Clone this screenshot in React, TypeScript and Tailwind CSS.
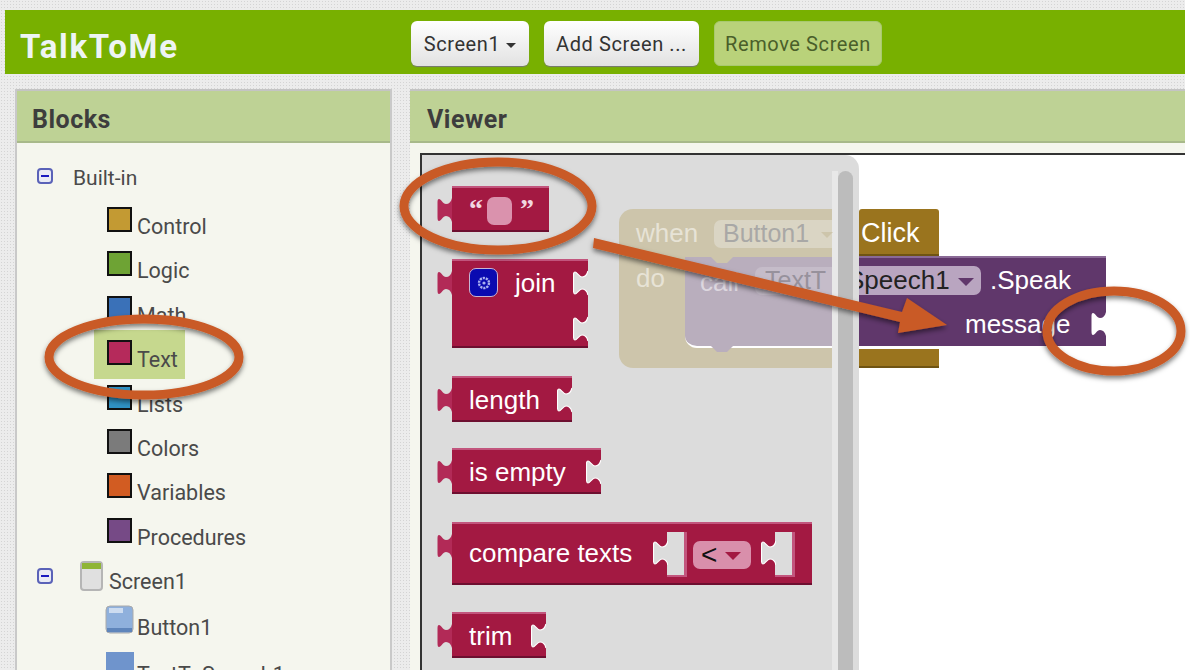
import type { ReactNode } from 'react';

const SANS = 'font-["Liberation_Sans",Arial,sans-serif]';
const UI = 'font-["Roboto","Noto_Sans",sans-serif]';

const TREE = [
  { label: 'Control', color: 'bg-[#c39a33]' },
  { label: 'Logic', color: 'bg-[#6ea334]' },
  { label: 'Math', color: 'bg-[#3a71b8]' },
  { label: 'Text', color: 'bg-[#b52a5b]', selected: true },
  { label: 'Lists', color: 'bg-[#2f92c4]' },
  { label: 'Colors', color: 'bg-[#7b7b7b]' },
  { label: 'Variables', color: 'bg-[#d25c22]' },
  { label: 'Procedures', color: 'bg-[#764a86]' },
];

const NOTCH = 'M15 1C14 5 12 7 9 7C6 7 4 2 2 2C1 2 .5 3 .5 5V20C.5 23 1 24 2 24C4 24 6 19 9 19C12 19 14 21 15 25';

function Collapse() {
  return (
    <span className="flex h-[16px] w-[16px] shrink-0 items-center justify-center rounded-[4px] border-2 border-[#5a62b8] bg-[#e9ebf5]">
      <span className="h-[2px] w-[8px] bg-[#1a1ac0]" />
    </span>
  );
}

function TreeRow({ label, color, selected }: { label: string; color: string; selected?: boolean }) {
  return (
    <div className="h-[44.4px] pl-[77px]">
      <div className={`flex h-[49px] w-[91px] items-start gap-[5px] pl-[13px] ${selected ? 'bg-[#c6d88e]' : ''}`}>
        <span className={`mt-[10px] h-[25px] w-[25px] shrink-0 border-2 border-[#111] ${color}`} />
        <span className="mt-[18px] text-[21.5px] leading-[24px] text-[#4a4a4a]">{label}</span>
      </div>
    </div>
  );
}

function Tab() {
  return (
    <svg width="15" height="26" viewBox="0 0 15 26" className="absolute left-[-15px] top-[9px]">
      <path d={NOTCH} fill="#b22a57" />
    </svg>
  );
}

// cut-out on a block's edge, the mirror of the tab
function Notch({ className }: { className: string }) {
  return (
    <svg width="15" height="26" viewBox="0 0 15 26" className={className}>
      <path d={NOTCH} fill="#dcdcdc" stroke="#fff" strokeWidth="1.2" />
    </svg>
  );
}

function Block({ w, h, socket, extraSocket, children }: { w: number; h: number; socket?: boolean; extraSocket?: boolean; children: ReactNode }) {
  return (
    <div
      className="relative flex items-start border-t-2 border-b-2 border-t-[#c2557d] border-b-[#6d0f30] bg-[#a31942] pl-[17px] text-[26px] text-white"
      style={{ width: w, height: h }}
    >
      <Tab />
      {children}
      {socket && <Notch className="absolute right-0 top-[9px]" />}
      {extraSocket && <Notch className="absolute right-0 top-[55px]" />}
    </div>
  );
}

function Socket() {
  return (
    <div className="relative mt-[8px] h-[45px] w-[20px] shrink-0 border-r-[3px] border-b-2 border-[#c2557d] bg-[#dcdcdc]">
      <Notch className="absolute left-[-14px] top-[8px]" />
    </div>
  );
}

export default function App() {
  return (
    <div className={`relative h-[670px] w-[1190px] overflow-hidden bg-white ${UI}`}>
      <div className="h-[670px] w-[1185px] bg-[#ececec] bg-[radial-gradient(#d4d4d4_1px,transparent_1px)] bg-[length:3px_3px] pt-[10px] pl-[5px]">
        <header className="flex h-[64px] w-[1180px] items-center bg-[#78b000]">
          <div className="w-[406px] pl-[15px] pt-[9px] text-[33px] font-bold tracking-[1.7px] text-[#eef4f4]">TalkToMe</div>
          <div className="flex items-center gap-[15px] pt-[2px] text-[20px] tracking-[0.6px] text-[#333]">
            <button className="flex h-[45px] w-[118px] items-center justify-center gap-[6px] rounded-[6px] bg-gradient-to-b from-white to-[#e2e2e2] pt-[2px] shadow-[0_1px_1px_#777]">
              Screen1
              <span className="mt-[2px] h-0 w-0 border-x-[5px] border-t-[5px] border-x-transparent border-t-[#333]" />
            </button>
            <button className="h-[45px] w-[155px] rounded-[6px] bg-gradient-to-b from-white to-[#e2e2e2] pt-[2px] shadow-[0_1px_1px_#777]">
              Add Screen ...
            </button>
            <button className="h-[45px] w-[168px] rounded-[6px] border border-[#a8c96f] bg-[#b9d27a] pt-[2px] text-[#4a5f2a]">
              Remove Screen
            </button>
          </div>
        </header>

        <div className="mt-[15px] flex gap-[18px] pl-[10px]">
          <section className="h-[600px] w-[377px] shrink-0 border-x-2 border-[#c9c9c9] bg-[#f5f6ee]">
            <h2 className="flex h-[54px] items-center border-t-2 border-b-2 border-t-[#c4c4c4] border-b-[#a8b98a] bg-[#bed295] pl-[15px] pt-[8px] text-[25px] font-bold tracking-[0.5px] text-[#3d3d3d]">
              Blocks
            </h2>
            <div className="pt-[18px]">
              <div className="flex h-[29px] items-center gap-[20px] pl-[20px] text-[21px] text-[#4a4a4a]">
                <Collapse />
                <span className="mt-[6px]">Built-in</span>
              </div>
              <div className="mt-[7px]">
                {TREE.map((row) => (
                  <TreeRow key={row.label} {...row} />
                ))}
              </div>
              <div className="mt-[2px] flex h-[44px] items-center pl-[20px] text-[21.5px] text-[#4a4a4a]">
                <Collapse />
                <svg width="23" height="30" viewBox="0 0 23 30" className="ml-[27px] shrink-0">
                  <rect x="1" y="1" width="21" height="28" rx="3" fill="#e0e0e0" stroke="#b5b5b5" strokeWidth="2" />
                  <rect x="2" y="2" width="19" height="6" fill="#8fb536" />
                </svg>
                <span className="ml-[6px] mt-[11px]">Screen1</span>
              </div>
              <div className="flex h-[44px] items-center gap-[2px] pl-[88px] text-[21.5px] text-[#4a4a4a]">
                <svg width="30" height="30" viewBox="0 0 30 30" className="shrink-0">
                  <rect x="1" y="1" width="27" height="27" rx="4" fill="#8fb0dc" stroke="#aaa" />
                  <rect x="4" y="3" width="14" height="5" fill="#cddcf0" />
                  <rect x="2" y="23" width="25" height="4" fill="#5f85bb" />
                </svg>
                <span className="mt-[15px]">Button1</span>
              </div>
              <div className="flex h-[44px] items-start gap-[2px] pl-[88px] pt-[9px] text-[21.5px] text-[#4a4a4a]">
                <svg width="30" height="30" viewBox="0 0 30 30" className="shrink-0">
                  <rect x="1" y="1" width="28" height="28" fill="#6f94cc" />
                </svg>
                <span className="mt-[8px]">TextToSpeech1</span>
              </div>
            </div>
          </section>

          <section className="h-[600px] w-[775px] shrink-0 bg-[#f5f6ee]">
            <h2 className="flex h-[54px] items-center border-t-2 border-b-2 border-t-[#c4c4c4] border-b-[#a8b98a] bg-[#bed295] pl-[17px] pt-[8px] text-[25px] font-bold tracking-[0.5px] text-[#3d3d3d]">
              Viewer
            </h2>
            <div className={`relative ml-[10px] mt-[10px] h-[540px] border-t-2 border-l-2 border-[#333] bg-white ${SANS}`}>
              {/* workspace blocks behind the flyout */}
              <div className="absolute left-[437px] top-[54px] h-[47px] w-[80px] rounded-t-[3px] border-b-2 border-[#6f5413] bg-[#9a741e] pl-[2px] pt-[8px] text-[27px] leading-[32px] text-white">
                Click
              </div>
              <div className="absolute left-[264px] top-[101px] h-[90px] w-[420px] border-t-2 border-[#8a6a96] bg-[#60376b] text-[26px] text-white">
                <span className="absolute left-[161px] top-[8px] flex h-[29px] items-center gap-[8px] rounded-r-[7px] bg-[#b9a5c0] pr-[7px] text-[#222]">
                  Speech1
                  <span className="mt-[3px] h-0 w-0 border-x-[8px] border-t-[8px] border-x-transparent border-t-[#60376b]" />
                </span>
                <span className="absolute left-[304px] top-[6px] leading-[32px]">.Speak</span>
                <span className="absolute left-[279px] top-[50px] leading-[32px]">message</span>
                <svg width="15" height="26" viewBox="0 0 15 26" className="absolute right-0 top-[53px]">
                  <path d={NOTCH} fill="#fff" />
                </svg>
              </div>
              <div className="absolute left-[437px] top-[194px] h-[19px] w-[80px] border-b-2 border-[#6f5413] bg-[#9a741e]" />

              {/* flyout */}
              <div className="absolute left-0 top-0 h-[540px] w-[437px] rounded-tr-[14px] bg-[#dcdcdc]">
                <div className="absolute left-[410px] top-[16px] h-[530px] w-[6px] bg-[#e8e8e8]" />
                <div className="absolute right-[6px] top-[16px] h-[530px] w-[15px] rounded-t-full bg-[#bcbcbc]" />

                <div className="absolute left-[197px] top-[54px] h-[159px] w-[213px] rounded-l-[14px] bg-[#cdc5ab] text-[26px] text-[#e7e3d6]">
                  <span className="absolute left-[17px] top-[5px]">when</span>
                  <span className="absolute left-[95px] top-[11px] flex h-[28px] w-[118px] items-center gap-[12px] rounded-l-[7px] bg-[#dad5c4] pl-[9px] text-[25px] text-[#a9a8a6]">
                    Button1
                    <span className="mt-[2px] h-0 w-0 border-x-[6px] border-t-[6px] border-x-transparent border-t-[#cdc5ab]" />
                  </span>
                  <span className="absolute left-[17px] top-[50px]">do</span>
                  <div className="absolute left-[66px] top-[48px] h-[91px] w-[147px] rounded-bl-[12px] border-b-2 border-white bg-[#b9aebd]">
                    <svg width="22" height="7" viewBox="0 0 22 7" className="absolute left-[26px] top-0">
                      <path d="M0 0H22L16 6H6Z" fill="#cdc5ab" />
                    </svg>
                    <span className="absolute left-[15px] top-[6px] text-[#ddd7df]">call</span>
                    <span className="absolute left-[70px] top-[10px] flex h-[28px] w-[77px] items-center rounded-l-[7px] bg-[#c5bcc9] pl-[10px] text-[25px] text-[#97919c]">TextT</span>
                    <svg width="22" height="8" viewBox="0 0 22 8" className="absolute left-[26px] top-[89px]">
                      <path d="M0 0H22L16 6H6Z" fill="#b9aebd" />
                    </svg>
                  </div>
                </div>

                <div className="absolute left-[30px] top-[31px] flex flex-col">
                  <div className="mb-[27px]">
                    <Block w={97} h={46}>
                      <span className="mt-[7px] font-['Liberation_Serif',serif] text-[28px] font-bold leading-[28px] text-[#f1d6e0]">“</span>
                      <span className="ml-[4px] mt-[9px] h-[28px] w-[25px] rounded-[7px] bg-[#da92ad]" />
                      <span className="ml-[8px] mt-[7px] font-['Liberation_Serif',serif] text-[28px] font-bold leading-[28px] text-[#f1d6e0]">”</span>
                    </Block>
                  </div>
                  <div className="mb-[28px]">
                    <Block w={136} h={89} socket extraSocket>
                      <span className="mt-[7px] flex h-[29px] w-[29px] items-center justify-center rounded-[7px] border border-[#c7b4d4] bg-[#0a0ab0]">
                        <svg width="16" height="16" viewBox="0 0 16 16">
                          <circle cx="8" cy="8" r="5" fill="none" stroke="#a9b0f0" strokeWidth="2.4" strokeDasharray="2.2 .9" />
                          <circle cx="8" cy="8" r="1.6" fill="#a9b0f0" />
                        </svg>
                      </span>
                      <span className="ml-[17px] mt-[6px] leading-[32px]">join</span>
                    </Block>
                  </div>
                  <div className="mb-[26px]">
                    <Block w={120} h={46} socket>
                      <span className="mt-[6px] leading-[32px]">length</span>
                    </Block>
                  </div>
                  <div className="mb-[28px]">
                    <Block w={149} h={46} socket>
                      <span className="mt-[6px] leading-[32px]">is empty</span>
                    </Block>
                  </div>
                  <div className="mb-[27px]">
                    <Block w={360} h={63}>
                      <span className="mt-[13px] w-[198px] shrink-0 leading-[32px]">compare texts</span>
                      <Socket />
                      <span className="ml-[6px] mt-[17px] flex h-[28px] w-[58px] shrink-0 items-center gap-[8px] rounded-[7px] bg-[#d98fab] pl-[8px] text-[28px] text-[#111]">
                        &lt;
                        <span className="mt-[2px] h-0 w-0 border-x-[8px] border-t-[8px] border-x-transparent border-t-[#a31942]" />
                      </span>
                      <span className="ml-[24px] flex"><Socket /></span>
                    </Block>
                  </div>
                  <Block w={94} h={46} socket>
                    <span className="mt-[6px] leading-[32px]">trim</span>
                  </Block>
                </div>
              </div>
            </div>
          </section>
        </div>
      </div>

      {/* red annotations laid over the screenshot */}
      <svg width="1190" height="670" viewBox="0 0 1190 670" className="pointer-events-none absolute left-0 top-0">
        <defs>
          <filter id="annotationShadow" x="-10%" y="-10%" width="120%" height="130%">
            <feDropShadow dx="0" dy="3" stdDeviation="2.5" floodColor="#000" floodOpacity="0.5" />
          </filter>
        </defs>
        <g fill="none" stroke="#c95a26" strokeWidth="9" filter="url(#annotationShadow)">
          <ellipse cx="144" cy="357" rx="95" ry="38" />
          <ellipse cx="498" cy="206" rx="94" ry="44" />
          <ellipse cx="1114" cy="331" rx="67" ry="40" />
        </g>
        <path d="M594 238L902 312L907 298L947 325L898 333L900 322L593 248Z" fill="#c95a26" filter="url(#annotationShadow)" />
      </svg>
    </div>
  );
}
